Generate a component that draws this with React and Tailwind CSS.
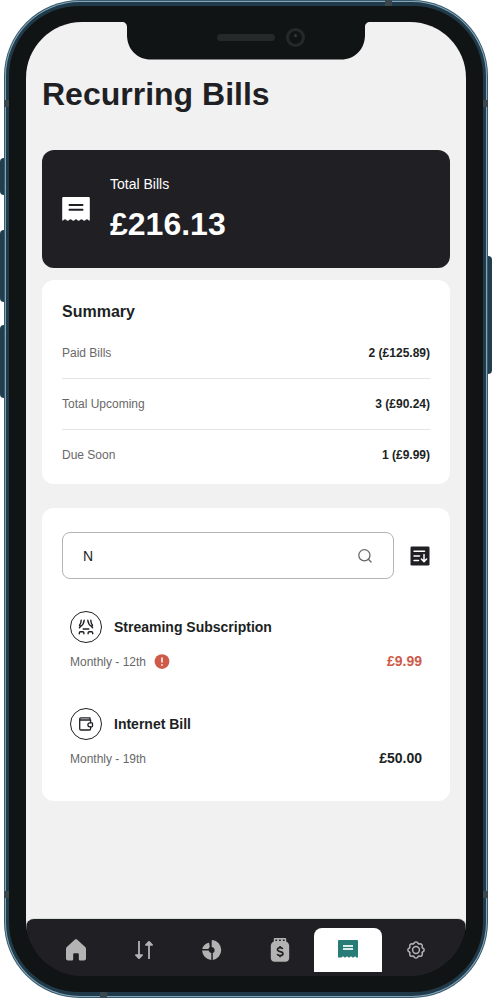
import React, { useState } from "react";

function ReceiptIcon({ className }) {
  return (
    <svg viewBox="0 0 28 24" className={className} aria-hidden="true">
      <path
        fill="currentColor"
        fillRule="evenodd"
        d="M1.500 0h25A1.300 1.300 0 0 1 27.800 1.300V23.600c-1.300.2-1.600-1.400-2.800-1.400-1.300 0-1.500 1.600-2.800 1.600s-1.500-1.600-2.700-1.600-1.500 1.600-2.800 1.600-1.500-1.600-2.700-1.600-1.500 1.600-2.700 1.600-1.500-1.600-2.800-1.600-1.500 1.600-2.700 1.600-1.600-1.600-2.800-1.600-1.500 1.600-2.800 1.400V1.300A1.300 1.300 0 0 1 1.500 0ZM7.500 7a1 1 0 0 0 0 2h13a1 1 0 0 0 0-2ZM7.500 11.800a1 1 0 0 0 0 2h13a1 1 0 0 0 0-2Z"
      />
    </svg>
  );
}

function ReceiptTabIcon() {
  return (
    <svg viewBox="0 0 20 18" className="h-[18px] w-5" aria-hidden="true">
      <path
        fill="currentColor"
        d="M1 0h18a1 1 0 0 1 1 1v16.500h-1.500l-1.300-1.200-1.700 1.200h-1l-1.500-1.200-1.500 1.200h-1L9 16.300l-1.500 1.200h-1L5 16.300l-1.500 1.200H0V1a1 1 0 0 1 1-1Z"
      />
      <path d="M5 6h10M5 9h10" stroke="#dcecea" strokeWidth="1.800" />
    </svg>
  );
}

function HomeIcon() {
  return (
    <svg viewBox="0 0 20 22" className="h-[22px] w-5" fill="currentColor" aria-hidden="true">
      <path d="M10 .2c.5 0 .9.100 1.300.5l7.900 7.400c.5.5.8 1 .8 1.700v9.700c0 1.100-.9 2-2 2h-3.600c-.9 0-1.600-.7-1.600-1.600v-4.400c0-.9-.4-1.300-1.300-1.300H8.500c-.9 0-1.300.4-1.300 1.300v4.400c0 .9-.7 1.600-1.600 1.600H2c-1.100 0-2-.9-2-2V9.800c0-.7.300-1.200.8-1.700L8.700.7C9.100.3 9.500.2 10 .2Z" />
    </svg>
  );
}

function ArrowsIcon() {
  return (
    <svg viewBox="0 0 18 20" className="h-5 w-[18px]" aria-hidden="true">
      <path d="M4 1v15M14 4v15" stroke="currentColor" strokeWidth="1.800" fill="none" />
      <path
        fill="currentColor"
        d="M.8 14.200h6.400c.8 0 1.100.8.6 1.300l-3.100 3.300c-.4.400-1 .4-1.400 0L.2 15.500c-.5-.5-.2-1.300.6-1.300ZM10.800 5.800h6.400c.8 0 1.100-.8.6-1.300l-3.100-3.300c-.4-.4-1-.4-1.400 0l-3.100 3.300c-.5.5-.2 1.300.6 1.300Z"
      />
    </svg>
  );
}

function DonutIcon() {
  return (
    <svg viewBox="0 0 20 20" className="h-5 w-5" fill="currentColor" aria-hidden="true">
      <path d="M9.700.8c0-.5.3-.8.800-.8a9.500 10 0 0 1 .3 19.900V13A3.200 3.200 0 0 0 9.700 6.900Z" />
      <path d="M5.900 3c.6-.4 1.300-.1 1.400.6l.5 3.500A4 4 0 0 0 6.400 9H.9C.5 9 .2 8.600.3 8.200A9 9 0 0 1 5.900 3Z" />
      <path d="M.1 10.600h6.500a3.500 3.500 0 0 0 2.700 2.500v6.800A9.800 9.800 0 0 1 .1 10.600Z" />
    </svg>
  );
}

function JarIcon() {
  return (
    <svg viewBox="0 0 20 24" className="h-6 w-5" aria-hidden="true">
      <path
        fill="currentColor"
        fillRule="evenodd"
        d="M5 0h10c.7 0 1.200.5 1.200 1.200v2.300c1.800.7 3 2.300 3 4.300V20c0 2.200-1.600 3.800-3.800 3.800H4.600C2.400 23.800.8 22.200.8 20V7.800c0-2 1.200-3.600 3-4.300V1.200C3.800.5 4.300 0 5 0Zm.4 1.600v1.500h1.700V1.600Zm3.700 0v1.500h1.700V1.600Zm3.800 0v1.500h1.700V1.600Z"
      />
      <path
        d="M12.700 11c-.3-.8-1.200-1.300-2.500-1.300-1.700 0-2.700.7-2.700 1.900 0 2.900 5.400 1.100 5.400 4.100 0 1.200-1.100 1.900-2.800 1.900-1.500 0-2.600-.6-2.900-1.500M10.100 8v1.700M10.100 17.600v1.700"
        fill="none"
        stroke="#201f24"
        strokeWidth="1.700"
      />
    </svg>
  );
}

function GearIcon() {
  return (
    <svg
      viewBox="0 0 18 18"
      className="h-[18px] w-[18px]"
      fill="none"
      stroke="currentColor"
      strokeWidth="1.500"
      strokeLinejoin="round"
      aria-hidden="true"
    >
      <path d="M7.400 1.500Q9 .3 10.600 1.500Q11 3.400 13 2.800Q15.400 2.800 15.300 5.200Q14.500 7 16.500 7.400Q17.700 9 16.500 10.600Q14.500 11 15.300 12.800Q15.400 15.300 13 15.300Q11 14.600 10.600 16.500Q9 17.700 7.400 16.500Q7 14.600 5 15.300Q2.600 15.300 2.700 12.800Q3.500 11 1.500 10.600Q.3 9 1.500 7.400Q3.500 7 2.700 5.200Q2.600 2.800 5 2.800Q7 3.400 7.400 1.500Z" />
      <circle cx="9" cy="9" r="3.400" />
    </svg>
  );
}

function SearchIcon() {
  return (
    <svg viewBox="0 0 16 16" className="h-4 w-4" fill="none" stroke="currentColor" strokeWidth="1.300" strokeLinecap="round" aria-hidden="true">
      <circle cx="7.400" cy="7.300" r="5.600" />
      <path d="m11.400 11.300 2.700 2.700" />
    </svg>
  );
}

function SortIcon() {
  return (
    <svg viewBox="0 0 20 20" className="h-5 w-5" aria-hidden="true">
      <rect x=".5" y=".5" width="19" height="19" rx="1.300" fill="#201f24" />
      <path
        d="M4 5.300h10.500M4 9.900h5.500M4 14.500h4.500M14 8.600v6.900M11.400 13l2.600 2.600 2.600-2.600"
        fill="none"
        stroke="#fff"
        strokeWidth="1.500"
        strokeLinecap="round"
        strokeLinejoin="round"
      />
    </svg>
  );
}

function TheatreIcon() {
  return (
    <svg viewBox="0 0 16 16" className="h-4 w-4" fill="none" stroke="currentColor" strokeWidth="1.400" strokeLinecap="round" strokeLinejoin="round" aria-hidden="true">
      <path d="M3.200 1.200C3.200 3.300 2.600 4.900 1.500 6.200l1 1.300C4.900 6 6 3.800 6.200 1.200M2.500 7.500 1.400 8.800" />
      <path d="M12.800 1.200c0 2.100.6 3.700 1.700 5l-1 1.300C11.100 6 10 3.800 9.800 1.200M13.500 7.500l1.100 1.300" />
      <path d="M5.200 10h5.600" />
      <path d="M1.300 14.800v-.8c0-.7.500-1.200 1.200-1.200h2.200c.7 0 1.200.5 1.200 1.200v.8M10.100 14.800v-.8c0-.7.5-1.200 1.200-1.200h2.200c.7 0 1.200.5 1.200 1.200v.8" />
    </svg>
  );
}

function WalletIcon() {
  return (
    <svg viewBox="0 0 16 16" className="h-4 w-4" fill="none" stroke="currentColor" strokeWidth="1.300" strokeLinecap="round" strokeLinejoin="round" aria-hidden="true">
      <path d="M12.600 6.500V4H2.800A1.100 1.100 0 0 1 2.800 1.800h9.200V4M1.700 2.900v9.900c0 .7.500 1.200 1.200 1.200h8.500c.7 0 1.200-.5 1.200-1.200V11" />
      <path d="M14.500 7.500v2.600c0 .4-.3.700-.7.700h-1.900a2 2 0 0 1 0-4h1.900c.4 0 .7.300.7.700Z" />
    </svg>
  );
}

function AlertIcon() {
  return (
    <svg viewBox="0 0 16 16" className="h-4 w-4" role="img" aria-label="Due soon">
      <circle cx="8" cy="7.600" r="7.400" fill="#cf5a49" />
      <path d="M8 3.600v5M8 10.300v1.400" stroke="#fff" strokeWidth="1.500" />
    </svg>
  );
}

function Notch() {
  return (
    <svg viewBox="0 0 248 38" className="absolute left-1/2 top-0 h-[38px] w-[248px] -translate-x-1/2" aria-hidden="true">
      <path d="M0 0h248c-3 0-5 2-5 5v8c0 14-10 24.500-24 24.500H29C15 37.500 5 27 5 13V5c0-3-2-5-5-5Z" fill="#101415" />
    </svg>
  );
}

const summary = [
  { label: "Paid Bills", value: "2 (£125.89)" },
  { label: "Total Upcoming", value: "3 (£90.24)" },
  { label: "Due Soon", value: "1 (£9.99)" },
];

const bills = [
  { name: "Streaming Subscription", due: "Monthly - 12th", amount: "£9.99", soon: true, Icon: TheatreIcon },
  { name: "Internet Bill", due: "Monthly - 19th", amount: "£50.00", soon: false, Icon: WalletIcon },
];

const tabs = [
  { name: "Overview", icon: <HomeIcon /> },
  { name: "Transactions", icon: <ArrowsIcon /> },
  { name: "Budgets", icon: <DonutIcon /> },
  { name: "Pots", icon: <JarIcon /> },
  { name: "Recurring Bills", icon: <ReceiptTabIcon />, active: true },
  { name: "Settings", icon: <GearIcon /> },
];

function Frame({ children }) {
  return (
    <div className="relative flex min-h-screen flex-col bg-white px-1">
      <span className="absolute left-0 top-[158px] h-[37px] w-1 rounded-l-sm bg-[#213e4e]" />
      <span className="absolute left-0 top-[230px] h-[72px] w-1 rounded-l-sm bg-[#213e4e]" />
      <span className="absolute left-0 top-[325px] h-[73px] w-1 rounded-l-sm bg-[#213e4e]" />
      <span className="absolute right-0 top-[256px] h-[118px] w-1 rounded-r-sm bg-[#213e4e]" />
      <div className="relative flex flex-1 flex-col overflow-hidden rounded-[76px] bg-[#385a6c] p-px">
        <div className="flex flex-1 flex-col rounded-[75px] bg-[#83a6ba] p-px">
          <div className="flex flex-1 flex-col rounded-[74px] bg-[#213a49] px-[3px] py-1">
            <div className="flex flex-1 flex-col rounded-[70px] bg-[#101415] px-[17px] py-4">{children}</div>
          </div>
        </div>
        <span className="absolute left-0 top-[100px] h-[7px] w-[5px] bg-[#3a474d]" />
        <span className="absolute right-0 top-[100px] h-[7px] w-[5px] bg-[#3a474d]" />
        <span className="absolute bottom-[100px] left-0 h-[7px] w-[5px] bg-[#3a474d]" />
        <span className="absolute bottom-[100px] right-0 h-[7px] w-[5px] bg-[#3a474d]" />
        <span className="absolute right-[96px] top-0 h-[6px] w-[7px] bg-[#3a474d]" />
        <span className="absolute bottom-0 left-[96px] h-[6px] w-[7px] bg-[#3a474d]" />
      </div>
      <span className="absolute left-1/2 top-[34px] z-10 h-[7px] w-[58px] -translate-x-1/2 rounded-full bg-[#25292a]" />
      <span className="absolute left-1/2 top-[28px] z-10 ml-10 h-[19px] w-[19px] rounded-full border-[3px] border-[#25292a] bg-[#101415]">
        <span className="absolute left-[5px] top-[3px] h-[3px] w-[3px] rounded-full bg-[#34393a]" />
      </span>
    </div>
  );
}

export default function App() {
  const [query, setQuery] = useState("N");
  return (
    <div className="font-['Liberation_Sans',Arial,sans-serif] text-[#201f24]">
      <Frame>
        <div className="relative flex flex-1 flex-col overflow-hidden rounded-[56px] bg-[#201f24]">
          <main className="-mb-2 flex-1 bg-[#f1f1f1] px-4 pb-2 pt-[52px]">
            <h1 className="text-[32px] font-bold leading-10">Recurring Bills</h1>

            <section className="mt-9 flex items-center gap-5 rounded-xl bg-[#201f24] px-5 py-6 text-white">
              <ReceiptIcon className="h-6 w-7 shrink-0" />
              <div>
                <p className="text-sm leading-[21px]">Total Bills</p>
                <p className="mt-[9px] text-[32px] font-bold leading-10">£216.13</p>
              </div>
            </section>

            <section className="mt-3 rounded-xl bg-white p-5">
              <h2 className="text-base font-bold leading-6">Summary</h2>
              <dl className="mt-2 divide-y divide-[#e4e4e4] text-xs leading-[18px]">
                {summary.map((row) => (
                  <div key={row.label} className="flex justify-between py-4 first:pt-3 last:pb-0">
                    <dt className="text-[#696868]">{row.label}</dt>
                    <dd className="font-bold">{row.value}</dd>
                  </div>
                ))}
              </dl>
            </section>

            <section className="mt-6 rounded-xl bg-white px-5 py-6">
              <div className="flex items-center gap-4">
                <div className="flex h-[47px] flex-1 items-center rounded-lg border border-[#b3b3b3] px-5">
                  <input
                    type="text"
                    aria-label="Search bills"
                    value={query}
                    onChange={(e) => setQuery(e.target.value)}
                    className="min-w-0 flex-1 bg-transparent text-sm outline-none"
                  />
                  <span className="text-[#696868]">
                    <SearchIcon />
                  </span>
                </div>
                <button type="button" aria-label="Sort">
                  <SortIcon />
                </button>
              </div>
              <ul className="mt-6 flex flex-col gap-5">
                {bills.map(({ name, due, amount, soon, Icon }) => (
                  <li key={name} className="p-2">
                    <div className="flex items-center gap-3">
                      <span className="flex h-8 w-8 items-center justify-center rounded-full border border-[#201f24]">
                        <Icon />
                      </span>
                      <h3 className="text-sm font-bold leading-[21px]">{name}</h3>
                    </div>
                    <div className="mt-2 flex items-center justify-between">
                      <p className="flex items-center gap-2 text-xs text-[#696868]">
                        {due}
                        {soon && <AlertIcon />}
                      </p>
                      <p className={soon ? "text-sm font-bold leading-[21px] text-[#cf5a49]" : "text-sm font-bold leading-[21px]"}>
                        {amount}
                      </p>
                    </div>
                  </li>
                ))}
              </ul>
            </section>
          </main>

          <nav className="relative grid grid-cols-6 rounded-t-lg bg-[#201f24] px-4 pb-1 pt-[9px] shadow-[0_-1px_0_#d8dfdd]">
            {tabs.map((tab) => (
              <a
                key={tab.name}
                href="#"
                aria-label={tab.name}
                className={
                  tab.active
                    ? "flex h-11 items-center justify-center rounded-t-lg bg-white pb-[2px] text-[#277c78]"
                    : "flex h-11 items-center justify-center text-[#b3b3b3]"
                }
              >
                {tab.icon}
              </a>
            ))}
          </nav>
          <Notch />
        </div>
      </Frame>
    </div>
  );
}
